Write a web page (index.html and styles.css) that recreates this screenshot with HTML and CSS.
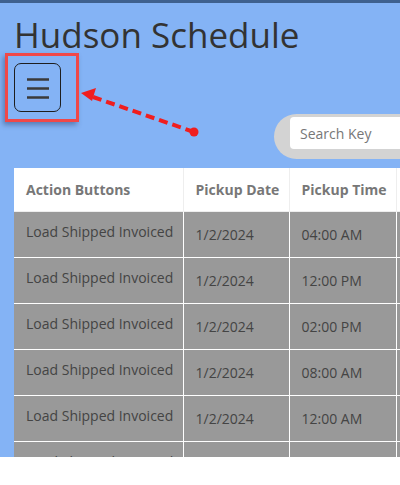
FILE: index.html
```html
<!DOCTYPE html>
<html lang="en">
<head>
<meta charset="utf-8">
<title>Hudson Schedule</title>
<link rel="stylesheet" href="styles.css">
</head>
<body>
<div class="page">
  <div class="topbar"></div>
  <h1 class="title">Hudson Schedule</h1>
  <div class="menu-row">
    <div class="menu-cell">
      <span class="highlight"></span>
      <button class="menu-btn" aria-label="Menu">
        <svg width="22" height="22" viewBox="0 0 22 22"><path d="M0 4.5h22M0 13.5h22M0 22.5h22" stroke="#3a3a3a" stroke-width="2.4" transform="translate(0,-2)"/></svg>
      </button>
    </div>
  </div>
  <svg class="arrow" width="130" height="60" viewBox="0 0 130 60">
    <line x1="119" y1="47" x2="18" y2="12" stroke="#f01e1e" stroke-width="4" stroke-dasharray="9 5"/>
    <polygon points="6,8 21,3 17,16" fill="#f01e1e"/>
    <circle cx="119" cy="47" r="4.5" fill="#f01e1e"/>
  </svg>
  <div class="search-row">
    <div class="search-pill">
      <input class="search-input" type="text" placeholder="Search Key">
    </div>
  </div>
  <table class="grid">
    <colgroup>
      <col class="c1"><col class="c2"><col class="c3"><col class="c4">
    </colgroup>
    <thead>
      <tr><th>Action Buttons</th><th>Pickup Date</th><th>Pickup Time</th><th></th></tr>
    </thead>
    <tbody>
      <tr><td class="act">Load Shipped Invoiced</td><td>1/2/2024</td><td>04:00 AM</td><td></td></tr>
      <tr><td class="act">Load Shipped Invoiced</td><td>1/2/2024</td><td>12:00 PM</td><td></td></tr>
      <tr><td class="act">Load Shipped Invoiced</td><td>1/2/2024</td><td>02:00 PM</td><td></td></tr>
      <tr><td class="act">Load Shipped Invoiced</td><td>1/2/2024</td><td>08:00 AM</td><td></td></tr>
      <tr><td class="act">Load Shipped Invoiced</td><td>1/2/2024</td><td>12:00 AM</td><td></td></tr>
      <tr><td class="act">Load Shipped Invoiced</td><td>1/2/2024</td><td>10:00 AM</td><td></td></tr>
    </tbody>
  </table>
</div>
</body>
</html>
```
FILE: styles.css
```css
html, body {
  margin: 0;
  padding: 0;
  background: #ffffff;
}
body {
  font-family: "Open Sans", "Liberation Sans", sans-serif;
  width: 400px;
}
.page {
  position: relative;
  height: 457px;
  overflow: hidden;
  background: #84b3f5;
}
.topbar {
  height: 3px;
  background: #3f618e;
}
.title {
  margin: 12px 0 0 14px;
  font-size: 35px;
  font-weight: 400;
  line-height: 40px;
  color: #333333;
}
.menu-row {
  display: flex;
  padding-left: 14px;
  margin-top: 8px;
}
.menu-cell {
  position: relative;
}
.highlight {
  position: absolute;
  left: -9px;
  top: -10px;
  width: 68px;
  height: 63px;
  border: 3px solid #f04848;
  box-shadow: -2px 3px 5px rgba(40, 60, 100, 0.45);
}
.menu-btn {
  display: flex;
  align-items: center;
  justify-content: center;
  width: 47px;
  height: 49px;
  padding: 0;
  border: 1px solid #1e1e1e;
  border-radius: 7px;
  background: transparent;
}
.arrow {
  position: absolute;
  left: 75px;
  top: 85px;
}
.search-row {
  display: flex;
  justify-content: flex-end;
  margin-top: 2px;
  margin-right: -60px;
}
.search-pill {
  display: flex;
  padding: 3px 0 10px 16px;
  background: #d3d3d3;
  border-radius: 23px 0 0 23px;
}
.search-input {
  width: 170px;
  height: 32px;
  box-sizing: border-box;
  padding: 0 10px;
  border: none;
  border-radius: 4px;
  background: #ffffff;
  font-family: "Open Sans", "Liberation Sans", sans-serif;
  font-size: 14px;
  color: #333;
  outline: none;
}
.search-input::placeholder {
  color: #777777;
}
.grid {
  margin: 9px 0 0 14px;
  border-collapse: collapse;
  table-layout: fixed;
  width: 500px;
}
.c1 { width: 169px; }
.c2 { width: 106px; }
.c3 { width: 107px; }
.c4 { width: 118px; }
.grid th {
  height: 43px;
  padding: 0 12px;
  box-sizing: border-box;
  background: #ffffff;
  text-align: left;
  font-size: 14px;
  font-weight: 700;
  color: #777777;
  border-right: 1px solid #eeeeee;
  border-bottom: 1px solid #eeeeee;
  white-space: nowrap;
}
.grid td {
  height: 46px;
  padding: 0 12px;
  box-sizing: border-box;
  background: #999999;
  font-size: 14px;
  color: #444444;
  border: 1px solid #ffffff;
  border-left: none;
  white-space: nowrap;
}
.grid td.act {
  padding-bottom: 6px;
}
```
